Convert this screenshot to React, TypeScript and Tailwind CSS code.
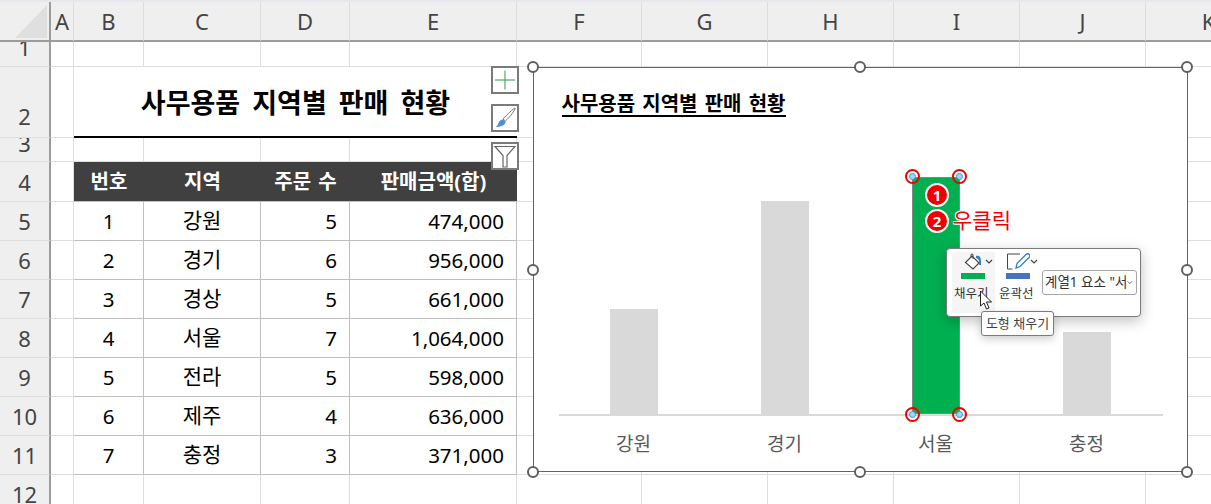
const font = "font-['Noto_Sans','Noto_Sans_CJK_KR',sans-serif]";

const columns = ["A", "B", "C", "D", "E", "F", "G", "H", "I", "J", "K"];
const rowHeights = [25, 71, 24, 40, 39, 39, 39, 39, 39, 39, 39, 39];

const sales = [
  [1, "강원", 5, "474,000"],
  [2, "경기", 6, "956,000"],
  [3, "경상", 5, "661,000"],
  [4, "서울", 7, "1,064,000"],
  [5, "전라", 5, "598,000"],
  [6, "제주", 4, "636,000"],
  [7, "충정", 3, "371,000"],
];

const bars = [
  { name: "강원", height: 105 },
  { name: "경기", height: 213 },
  { name: "서울", height: 237, active: true },
  { name: "충정", height: 82 },
];

function Cell({ row, col }: { row: number; col: number }) {
  // row 2 is merged over B:E, the sales table has darker lines
  const inTable = row >= 4 && row <= 11 && col >= 1 && col <= 4;
  const ruled = row === 2 && col >= 1 && col <= 4;
  let text: string | number = "";
  let align = "justify-center";
  let size = "text-[21px]";
  if (row >= 5 && row <= 11 && col >= 1 && col <= 4) {
    text = sales[row - 5][col - 1];
    if (col >= 3) align = "justify-end pr-3";
    if (col !== 2) size = "text-[20.5px]";
  }
  const headCell = row === 4 && col >= 1 && col <= 4;
  const heads = ["번호", "지역", "주문 수", "판매금액(합)"];
  return (
    <div
      className={`flex items-center overflow-hidden text-black ${align} ${size} ${
        headCell
          ? "bg-[#404040] border-b border-[#bfbfbf]"
          : ruled
            ? "border-b-[2.5px] border-black"
            : inTable
              ? "border-r border-b border-[#bfbfbf]"
              : "border-r border-b border-[#dedede]"
      }`}
    >
      {headCell ? <span className="text-[20px] font-bold whitespace-nowrap text-white [word-spacing:2px]">{heads[col - 1]}</span> : text}
    </div>
  );
}

function Handle({ className }: { className: string }) {
  return <span className={`absolute size-[12px] rounded-full border-2 border-[#5f5f5f] bg-white ${className}`} />;
}

function Marker({ className }: { className: string }) {
  return (
    <span className={`absolute flex size-[15px] items-center justify-center rounded-full border-2 border-[#f00000] ${className}`}>
      <span className="size-[7px] rounded-full border border-[#2f8fe6] bg-[#a9d4f5]" />
    </span>
  );
}

function Badge({ n }: { n: string }) {
  return (
    <span className="flex size-[24px] items-center justify-center rounded-full border-2 border-white bg-[#f00000] text-[15px] font-bold text-white">
      {n}
    </span>
  );
}

function Chevron() {
  return (
    <svg width="8" height="5" viewBox="0 0 8 5" fill="none" stroke="#444" strokeWidth="1.2">
      <path d="M1 1l3 3 3-3" />
    </svg>
  );
}

function ToolButton({
  icon,
  swatch,
  label,
  className,
}: {
  icon: React.ReactNode;
  swatch: string;
  label: string;
  className: string;
}) {
  return (
    <div className={`flex h-[61px] flex-col items-start rounded-[3px] ${className}`}>
      <div className="flex h-[18px] w-[41px] items-center justify-end">
        {icon}
        <Chevron />
      </div>
      <div className={`ml-[9px] mt-[3px] h-[6px] w-[24px] ${swatch}`} />
      <span className="ml-[2px] mt-[7px] text-[12.5px] leading-[16px] whitespace-nowrap text-[#333]">{label}</span>
    </div>
  );
}

function SideButton({ top, children }: { top: string; children: React.ReactNode }) {
  return (
    <div className={`absolute left-[491px] size-[28px] border-2 border-[#7a7a7a] bg-white ${top}`}>
      {children}
    </div>
  );
}

export default function App() {
  return (
    <div className={`relative h-[504px] w-[1211px] overflow-hidden bg-white ${font}`}>
      {/* sheet grid */}
      <div className="grid grid-cols-[51px_23px_70px_117px_89px_167px_125px_126px_126px_126px_126px_126px]">
        <div className="relative h-[42px] border-b-2 border-r-2 border-[#9c9c9c] bg-[#efefef]">
          <svg className="absolute left-[14px] top-[4px]" width="34" height="35" viewBox="0 0 34 35">
            <path d="M33 1V34H1z" fill="#dfdfdf" />
          </svg>
        </div>
        {columns.map((c) => (
          <div
            key={c}
            className="flex h-[42px] items-center justify-center border-b-2 border-r border-b-[#9c9c9c] border-r-[#dcdcdc] bg-[#efefef] pt-[2px] text-[22px] text-[#444444]"
          >
            {c}
          </div>
        ))}
        {rowHeights.map((h, r) => (
          <div key={r} className="contents">
            <div
              style={{ height: h }}
              className={`flex justify-center overflow-hidden border-b border-r-2 border-b-[#dcdcdc] border-r-[#9c9c9c] bg-[#efefef] text-[22px] leading-[30px] text-[#444444] ${
                r === 0 || r === 2 ? "items-start" : r === 1 ? "items-end pb-[6px]" : "items-center"
              }`}
            >
              <span className={r === 0 || r === 2 ? "-mt-[10px]" : ""}>{r + 1}</span>
            </div>
            {columns.map((_, c) => (
              <Cell key={c} row={r + 1} col={c} />
            ))}
          </div>
        ))}
      </div>
      <div className="absolute left-0 top-0 h-[2px] w-full bg-[#e6e6ec]" />

      {/* merged title */}
      <div className="absolute left-[74px] top-[70px] flex h-[66px] w-[443px] items-center justify-center text-[27px] font-bold whitespace-nowrap text-black [word-spacing:5px]">
        사무용품 지역별 판매 현황
      </div>

      {/* chart shortcut buttons */}
      <SideButton top="top-[66px]">
        <svg width="24" height="24" viewBox="0 0 24 24" stroke="#2f9a4c" strokeWidth="1">
          <path d="M12 2.5v19M2 12h20" />
        </svg>
      </SideButton>
      <SideButton top="top-[104px]">
        <svg width="24" height="24" viewBox="0 0 24 24">
          <path d="M22 2c.8 1.5-5.5 9.500-9.500 13l-2.500-2C14 8.500 20.500 2.500 22 2z" fill="#fff" stroke="#777" strokeWidth="1" />
          <path d="M10 13.500l2.500 2c.2 3-3.500 5.500-10 5.500 2-1 2.500-2.500 3-4 .7-2 2.500-3.500 4.500-3.500z" fill="#4a90d9" />
        </svg>
      </SideButton>
      <SideButton top="top-[142px]">
        <svg width="24" height="24" viewBox="0 0 24 24" fill="#fff" stroke="#666" strokeWidth="1.2">
          <path d="M2 2.500h20l-8 9V23h-4V11.500z" />
        </svg>
      </SideButton>

      {/* chart */}
      <div className="absolute left-[533px] top-[67px] h-[405px] w-[655px] border-[1.5px] border-[#636363] bg-white">
        <div className="ml-[27.5px] mt-[25px] w-fit border-b-2 border-black text-[20px] font-bold leading-[22px] whitespace-nowrap text-black [word-spacing:2px]">
          사무용품 지역별 판매 현황
        </div>
        <div className="ml-[24.5px] mt-[59px] flex h-[240px] w-[604px] items-end justify-around border-b-2 border-[#d9d9d9]">
          {bars.map((b) => (
            <div
              key={b.name}
              style={{ height: b.height }}
              className={`w-[48px] ${b.active ? "border border-[#7a8a80] bg-[#00b050]" : "bg-[#d9d9d9]"}`}
            />
          ))}
        </div>
        <div className="ml-[24px] mt-[14px] flex w-[604px] justify-around text-[19px] text-[#595959]">
          {bars.map((b) => (
            <span key={b.name} className="w-[48px] text-center whitespace-nowrap">
              {b.name}
            </span>
          ))}
        </div>
      </div>

      <Handle className="left-[527px] top-[61px]" />
      <Handle className="left-[854px] top-[61px]" />
      <Handle className="left-[1181px] top-[61px]" />
      <Handle className="left-[527px] top-[264px]" />
      <Handle className="left-[1181px] top-[264px]" />
      <Handle className="left-[527px] top-[466px]" />
      <Handle className="left-[854px] top-[466px]" />
      <Handle className="left-[1181px] top-[466px]" />

      <Marker className="left-[905px] top-[169px]" />
      <Marker className="left-[952px] top-[169px]" />
      <Marker className="left-[905px] top-[407px]" />
      <Marker className="left-[952px] top-[407px]" />

      {/* numbered callouts over the selected bar */}
      <div className="absolute left-[925px] top-[183px] flex flex-col gap-[2px]">
        <Badge n="1" />
        <div className="flex items-center gap-[4px]">
          <Badge n="2" />
          <span className="-mt-[2px] text-[21px] leading-[24px] whitespace-nowrap text-[#f00000] [text-shadow:1px_1px_0_#fff,-1px_-1px_0_#fff,1px_-1px_0_#fff,-1px_1px_0_#fff]">
            우클릭
          </span>
        </div>
      </div>

      {/* mini toolbar */}
      <div className="absolute left-[946px] top-[248px] flex h-[69px] w-[195px] items-start rounded-[4px] border border-[#7a7a7a] bg-white pl-[5px] pt-[3px] shadow-[0_4px_14px_rgba(0,0,0,0.25)]">
        <ToolButton
          className="w-[43px] bg-[#f5f5f5]"
          swatch="bg-[#00b050]"
          label="채우기"
          icon={
            <svg width="24" height="18" viewBox="-3 -1 24 18" fill="none">
              <path d="M1.500 9.500L8 3l7 7-6 6z" stroke="#444" strokeWidth="1.1" fill="#fff" />
              <path d="M7 5V2c0-1.500 2-1.500 2 0v4" stroke="#444" strokeWidth="1" />
              <path d="M12 3c3-1 5 .5 5 5v4h-2V8c0-1.500-1-2.500-3-3z" fill="#3b7fc4" />
            </svg>
          }
        />
        <ToolButton
          className="ml-[2px] w-[42px]"
          swatch="bg-[#4472c4]"
          label="윤곽선"
          icon={
            <svg width="26" height="20" viewBox="-2 -1 26 20" fill="none">
              <path d="M14 2H1.500v15h5" stroke="#444" strokeWidth="1" />
              <path d="M10 16l1-4.500L20 2.500c1-1 2.500-1 3.300 0 .8 1 .6 2-.3 3L14 14.500z" stroke="#2f7fd0" strokeWidth="1.300" fill="#fff" />
            </svg>
          }
        />
        <div className="ml-[3px] mt-[18px] flex h-[25px] w-[95px] items-center justify-between overflow-hidden rounded-[3px] border border-[#a6a6a6] bg-white pl-[2px] pr-[3px] text-[13.5px] whitespace-nowrap text-[#333]">
          계열1 요소 "서
          <Chevron />
        </div>
      </div>

      {/* tooltip */}
      <div className="absolute left-[981px] top-[311px] flex h-[25px] w-[73px] items-center justify-center rounded-[3px] border border-[#7a7a7a] bg-white text-[13px] whitespace-nowrap text-[#444] shadow-[0_3px_8px_rgba(0,0,0,0.2)]">
        도형 채우기
      </div>

      {/* mouse pointer */}
      <svg className="absolute left-[979px] top-[290px]" width="15" height="21" viewBox="0 0 15 21">
        <path d="M1.500 1v15l3.500-3 2.500 6 2.500-1-2.500-6h5z" fill="#fff" stroke="#222" strokeWidth="1" />
      </svg>
    </div>
  );
}
